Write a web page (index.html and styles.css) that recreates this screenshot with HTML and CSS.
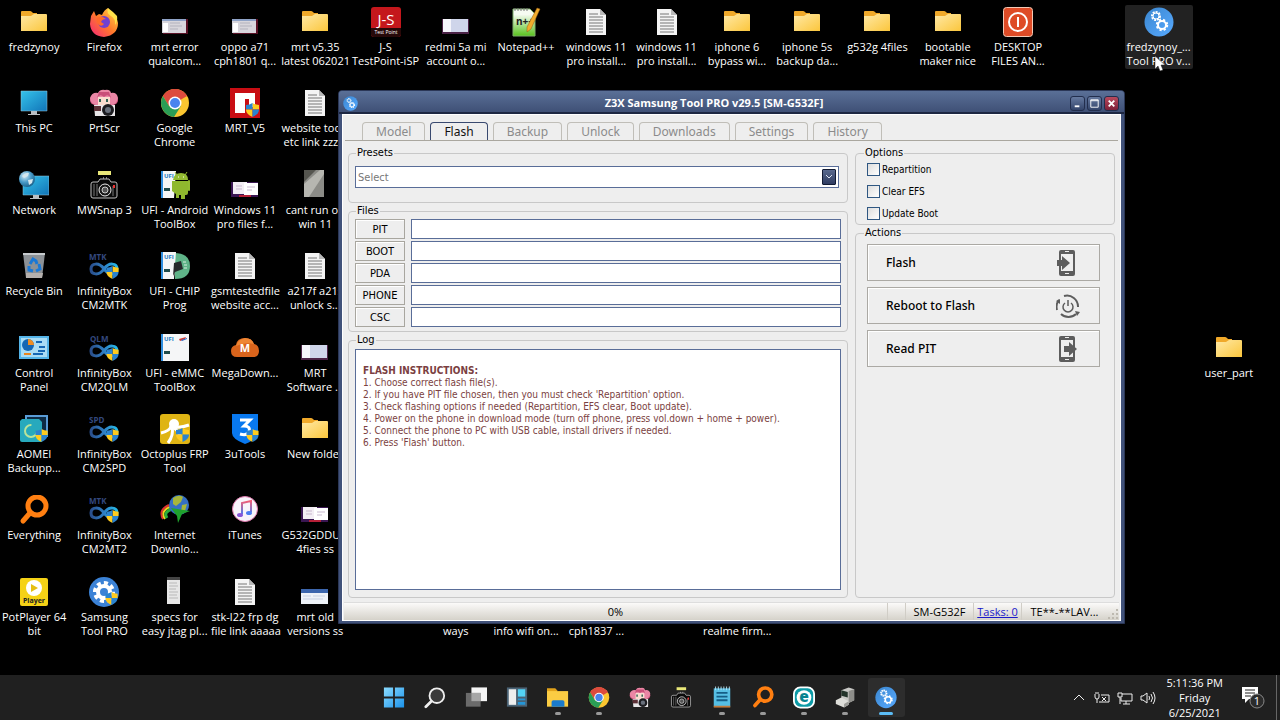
FILE: index.html
```html
<!DOCTYPE html>
<html lang="en">

<head>
  <meta charset="UTF-8">
  <meta name="viewport" content="width=device-width, initial-scale=1.0">
  <title>Z3X Samsung Tool PRO</title>
  <link rel="stylesheet" href="styles.css">
</head>

<body>

  <!-- shared icons -->
  <svg class="defs" aria-hidden="true">
    <defs>
      <linearGradient id="g-folder" x1="0" y1="0" x2="1" y2="1">
        <stop offset="0" stop-color="#ffe9a6" />
        <stop offset="1" stop-color="#fbc63c" />
      </linearGradient>
      <linearGradient id="g-screen" x1="0" y1="0" x2="1" y2="1">
        <stop offset="0" stop-color="#35c3ea" />
        <stop offset="1" stop-color="#1174b8" />
      </linearGradient>
      <linearGradient id="g-blue" x1="0" y1="0" x2="1" y2="1">
        <stop offset="0" stop-color="#3a86cf" />
        <stop offset="1" stop-color="#58aaff" />
      </linearGradient>
      <linearGradient id="g-inf" x1="0" y1="0" x2="1" y2="0">
        <stop offset="0" stop-color="#2a4f8c" />
        <stop offset="0.5" stop-color="#2f7fc4" />
        <stop offset="1" stop-color="#25b9e8" />
      </linearGradient>
      <linearGradient id="g-fox" x1="1" y1="0" x2="0" y2="1">
        <stop offset="0" stop-color="#ffe14a" />
        <stop offset="0.5" stop-color="#ff7a2a" />
        <stop offset="1" stop-color="#f4227a" />
      </linearGradient>
      <linearGradient id="g-win" x1="0" y1="0" x2="1" y2="1">
        <stop offset="0" stop-color="#8bdcff" />
        <stop offset="1" stop-color="#1b92ea" />
      </linearGradient>
      <linearGradient id="g-note" x1="0" y1="0" x2="0" y2="1">
        <stop offset="0" stop-color="#f25b74" />
        <stop offset="1" stop-color="#4a7df0" />
      </linearGradient>
      <linearGradient id="g-npp" x1="0" y1="0" x2="0" y2="1">
        <stop offset="0.2" stop-color="#f6fbf2" />
        <stop offset="1" stop-color="#58c21c" />
      </linearGradient>
      <radialGradient id="g-globe" cx="0.35" cy="0.3" r="0.8">
        <stop offset="0" stop-color="#d7ecf7" />
        <stop offset="0.5" stop-color="#4a9cc9" />
        <stop offset="1" stop-color="#14567f" />
      </radialGradient>
    </defs>

    <symbol id="folder" viewBox="0 0 30 30">
      <path d="M2 5q0-1 1-1h8q1 0 2 1l1 1h4v5H2z" fill="#f0a92a" />
      <path d="M2 9h10l3-2h12q1 0 1 1v16H2z" fill="url(#g-folder)" />
    </symbol>
    <symbol id="file" viewBox="0 0 30 30">
      <path d="M5 2h14l6 6v20H5z" fill="#f4f4f4" />
      <path d="M19 2l6 6h-6z" fill="#b9b9b9" />
      <path d="M8 7h9M8 10h14M8 13h14M8 16h14M8 19h14M8 22h14M8 25h14" stroke="#777" fill="none" />
    </symbol>
    <symbol id="shield" viewBox="0 0 14 15">
      <path d="M7 0q3 2 7 2v5H7z" fill="#ffcb1f" />
      <path d="M7 0Q4 2 0 2v5h7z" fill="#2a83cf" />
      <path d="M0 7q0 5 7 8V7z" fill="#ffcb1f" />
      <path d="M14 7q0 5-7 8V7z" fill="#2a83cf" />
    </symbol>
    <symbol id="thumb" viewBox="0 0 30 30">
      <path d="M3 12h25v15H3z" fill="#5a1226" />
      <path d="M2 12h24v14H2z" fill="#d8d6dc" />
      <path d="M2 12h24v2H2z" fill="#8fa3c7" />
      <path d="M3 16h5v9H3z" fill="#fff" />
      <path d="M10 16h10M10 19h12M10 22h8" stroke="#b2b2bd" fill="none" />
    </symbol>
    <symbol id="thumb-two" viewBox="0 0 30 30">
      <path d="M1 12h27v15H1z" fill="#3a1652" />
      <path d="M3 12h14v12H3z" fill="#f3eef4" />
      <path d="M14 13h14v12H14z" fill="#fff" />
      <path d="M6 16h6M6 19h6M17 17h8M17 20h5" stroke="#c9b9cf" fill="none" />
      <path d="M9 25h12v2H9z" fill="#b51f37" />
    </symbol>
    <symbol id="thumb-white" viewBox="0 0 30 30">
      <path d="M1 12h27v15H1z" fill="#eef2f8" />
      <path d="M1 12h27v4H1z" fill="#3c66ad" />
      <path d="M3 19h8M13 19h12M3 22h20" stroke="#c9d2e2" fill="none" />
    </symbol>
    <symbol id="thumb-mix" viewBox="0 0 30 30">
      <path d="M1 12h27v15H1z" fill="#4b2246" />
      <path d="M2 12h10v13H2z" fill="#f5f5fb" />
      <path d="M10 12h17v13H10z" fill="#cfd5ea" />
    </symbol>
    <symbol id="chrome" viewBox="0 0 30 30">
      <circle cx="15" cy="15" r="14" fill="#fbc630" />
      <path d="M15 15L2.900 8A14 14 0 0 1 27.100 8z" fill="#dd4b3e" />
      <path d="M15 8h12.100A14 14 0 0 0 2.900 8L9 18z" fill="#dd4b3e" />
      <path d="M2.900 8A14 14 0 0 0 14 29l7-11-6 3-6-3z" fill="#2a9d55" />
      <circle cx="15" cy="15" r="6.500" fill="#fff" />
      <circle cx="15" cy="15" r="5" fill="#4a84ee" />
    </symbol>
    <symbol id="girl" viewBox="0 0 30 30">
      <circle cx="6" cy="12" r="5" fill="#d85c86" />
      <circle cx="24" cy="12" r="5" fill="#d85c86" />
      <path d="M1 10q2-6 8-5 2-4 7-3 5-1 6 3 6-1 7 5-2 7-6 7H7q-5-1-6-7z" fill="#ea86a5" />
      <path d="M9 9h12v8q-6 3-12 0z" fill="#fadccf" />
      <path d="M8 10q3-5 7-1 4-4 7 1l-2-6H10z" fill="#c94e79" />
      <path d="M11 11v3M18 11v3" stroke="#326457" stroke-width="2" fill="none" />
      <path d="M5 17h21v11H6z" fill="#e8e6e8" />
      <circle cx="19" cy="22" r="6" fill="#1c1c20" />
      <circle cx="19" cy="22" r="3" fill="#69707c" />
      <path d="M5 18h7v5H5z" fill="#5c3036" />
    </symbol>
    <symbol id="camera" viewBox="0 0 30 30">
      <path d="M9 1h13v4H9z" fill="#e9e779" />
      <path d="M14 8h1M17 8h1" stroke="#fff" />
      <path d="M2 14q0-2 2-2h5l2-3h9l2 3h4q2 0 2 2v12q0 2-2 2H4q-2 0-2-2z" fill="#0a0a0a" stroke="#bdbdbd" />
      <path d="M5 14v12M8 14v12M24 16v10" stroke="#777" fill="none" />
      <path d="M25 15v3" stroke="#e33" stroke-width="2" />
      <circle cx="16" cy="20" r="6" fill="#191919" stroke="#eee" />
      <circle cx="16" cy="20" r="3" fill="#555" stroke="#ccc" />
    </symbol>
    <symbol id="glass" viewBox="0 0 30 30">
      <circle cx="18" cy="11" r="9" fill="none" stroke="#ff7f11" stroke-width="5" />
      <path d="M11 18L4 26" stroke="#ff7f11" stroke-width="5" stroke-linecap="round" />
    </symbol>
    <symbol id="infinity" viewBox="0 0 30 30">
      <path d="M15 18C10 11 2 12 2 18s8 7 13 0 13-6 13 0-8 7-13 0z" fill="none" stroke="url(#g-inf)" stroke-width="3" />
      <use href="#shield" x="17" y="15" width="13" height="13" />
    </symbol>
    <symbol id="gears" viewBox="0 0 30 30">
      <circle cx="15" cy="15" r="14.500" fill="url(#g-blue)" />
      <circle cx="12" cy="9" r="4" fill="none" stroke="#fff" stroke-width="2" stroke-dasharray="2 1" />
      <circle cx="12" cy="9" r="3" fill="none" stroke="#fff" />
      <circle cx="18" cy="18" r="5" fill="none" stroke="#fff" stroke-width="2.500" stroke-dasharray="2 2" />
      <circle cx="18" cy="18" r="4" fill="none" stroke="#fff" stroke-width="2" />
    </symbol>
    <symbol id="ufi" viewBox="0 0 30 30">
      <path d="M1 1h15l-2 27H1z" fill="#f5f6f7" />
      <path d="M1 1h2v27H1z" fill="#2f8ee0" />
      <path d="M4 18h6v3H4z" fill="#1f4b4b" />
    </symbol>
    <symbol id="phone" viewBox="0 0 24 28">
      <path fill-rule="evenodd" d="M5 1h12q2 0 2 2v22q0 2-2 2H5q-2 0-2-2V3q0-2 2-2zM5 5v17h12V5zM9 2v1h4V2zM9 24v1h4v-1z" fill="#5d5d5d" />
    </symbol>
  </svg>

  <main class="desktop">
    <ul class="row">
      <li class="item"><svg class="icon"><use href="#folder" /></svg>fredzynoy</li>
      <li class="item">
        <svg class="icon" viewBox="0 0 30 30">
          <path d="M2 9l3-5 2 5 3-2 3 1q2-5 6-7l2 5q7 3 8 10 0 12-14 14Q2 29 1 17z" fill="url(#g-fox)" />
          <circle cx="15" cy="15" r="6" fill="#7040d0" />
          <path d="M8 11q4-3 9 1-4 0-5 3l3 2q-2 3-5 1-3-3-2-7z" fill="#ff6a2c" />
          <path d="M19 1q-2 5 3 8t4 9q3-4 2-9l-4-4z" fill="#ffe14a" />
        </svg>Firefox
      </li>
      <li class="item"><svg class="icon"><use href="#thumb" /></svg>mrt error<br>qualcom...</li>
      <li class="item"><svg class="icon"><use href="#thumb" /></svg>oppo a71<br>cph1801 q...</li>
      <li class="item"><svg class="icon"><use href="#folder" /></svg>mrt v5.35<br>latest 062021</li>
      <li class="item">
        <svg class="icon" viewBox="0 0 30 30">
          <rect width="30" height="30" rx="3" fill="#c4171c" />
          <path d="M0 21h30v6q0 3-3 3H3q-3 0-3-3z" fill="#260909" />
          <text x="15" y="18" font-size="15" text-anchor="middle" fill="#fff">J-S</text>
          <text x="15" y="27" font-size="5" text-anchor="middle" fill="#fff">Test Point</text>
        </svg>J-S<br>TestPoint-iSP
      </li>
      <li class="item"><svg class="icon"><use href="#thumb-mix" /></svg>redmi 5a mi<br>account o...</li>
      <li class="item">
        <svg class="icon" viewBox="0 0 30 30">
          <path d="M2 2h17l5 5v22H2z" fill="url(#g-npp)" stroke="#7fae6a" />
          <path d="M4 1v3M7 1v3M10 1v3M13 1v3M16 1v3" stroke="#777" />
          <text x="5" y="18" font-size="10" font-weight="700" fill="#222">n++</text>
          <path d="M26 1l3 1-9 20-4 3v-5z" fill="#f1ac2d" stroke="#935c14" stroke-width="0.500" />
        </svg>Notepad++
      </li>
      <li class="item"><svg class="icon"><use href="#file" /></svg>windows 11<br>pro install...</li>
      <li class="item"><svg class="icon"><use href="#file" /></svg>windows 11<br>pro install...</li>
      <li class="item"><svg class="icon"><use href="#folder" /></svg>iphone 6<br>bypass wi...</li>
      <li class="item"><svg class="icon"><use href="#folder" /></svg>iphone 5s<br>backup da...</li>
      <li class="item"><svg class="icon"><use href="#folder" /></svg>g532g 4files</li>
      <li class="item"><svg class="icon"><use href="#folder" /></svg>bootable<br>maker nice</li>
      <li class="item">
        <svg class="icon" viewBox="0 0 30 30">
          <rect x="0.500" y="0.500" width="29" height="29" rx="3" fill="#de4b26" stroke="#f3c9b5" />
          <circle cx="15" cy="15" r="9" fill="none" stroke="#fff" stroke-width="2" />
          <path d="M15 10v10" stroke="#fff" stroke-width="2" />
        </svg>DESKTOP<br>FILES AN...
      </li>
      <li class="item col-17 hovered"><svg class="icon"><use href="#gears" /></svg>fredzynoy_...<br>Tool PRO v...</li>
    </ul>

    <ul class="row">
      <li class="item">
        <svg class="icon" viewBox="0 0 30 30">
          <path d="M2 3h26v20H2z" fill="url(#g-screen)" stroke="#9bc7d8" stroke-width="0.500" />
          <path d="M12 23h6v3h3v1H9v-1h3z" fill="#b9bec2" />
        </svg>This PC
      </li>
      <li class="item"><svg class="icon"><use href="#girl" /></svg>PrtScr</li>
      <li class="item"><svg class="icon"><use href="#chrome" /></svg>Google<br>Chrome</li>
      <li class="item">
        <svg class="icon" viewBox="0 0 30 30">
          <path d="M0 0h30v30H0z" fill="#c90d13" />
          <path d="M5 5h20v14h-6v-8h-4v14H5z" fill="#fff" />
          <use href="#shield" x="16" y="15" width="13" height="14" />
        </svg>MRT_V5
      </li>
      <li class="item"><svg class="icon"><use href="#file" /></svg>website tools<br>etc link zzz...</li>
      <li class="item col-9"><svg class="icon"><use href="#file" /></svg></li>
    </ul>

    <ul class="row">
      <li class="item">
        <svg class="icon" viewBox="0 0 30 30">
          <path d="M4 6h26v19H4z" fill="url(#g-screen)" stroke="#9bc7d8" stroke-width="0.500" />
          <path d="M14 25h6v3h3v1H11v-1h3z" fill="#b9bec2" />
          <circle cx="8" cy="9" r="8" fill="url(#g-globe)" />
          <path d="M3 6q4-4 7-3l-1 3-4 2zM9 10l5-1-1 4-3 2z" fill="#d5e7ee" />
        </svg>Network
      </li>
      <li class="item"><svg class="icon"><use href="#camera" /></svg>MWSnap 3</li>
      <li class="item">
        <svg class="icon" viewBox="0 0 30 30">
          <use href="#ufi" width="30" height="30" />
          <text x="4" y="8" font-size="6" font-weight="700" fill="#1479c4">UFI</text>
          <path d="M13 10q1-7 8-7t7 7z" fill="#93bb32" />
          <path d="M15 2l2 3M27 2l-2 3" stroke="#93bb32" />
          <path d="M12 11h16v12q0 2-2 2h-1v4h-4v-4h-2v3h-3v-4l-4-3z" fill="#8fb82e" />
          <path d="M29 11v9" stroke="#93bb32" stroke-width="2" stroke-linecap="round" />
          <path d="M18 7h1M23 7h1" stroke="#fff" />
        </svg>UFI - Android<br>ToolBox
      </li>
      <li class="item"><svg class="icon"><use href="#thumb-two" /></svg>Windows 11<br>pro files f...</li>
      <li class="item">
        <svg class="icon" viewBox="0 0 30 30">
          <path d="M4 0h20v27H4z" fill="#8b8b86" />
          <path d="M4 14L20 0h4v4L9 27H4z" fill="#b6b6b0" />
          <path d="M4 0h12L4 12z" fill="#55554f" />
        </svg>cant run on<br>win 11
      </li>
    </ul>

    <ul class="row">
      <li class="item">
        <svg class="icon" viewBox="0 0 30 30">
          <path d="M4 2h22l-3 25H7z" fill="#8c9196" />
          <path d="M4 2h22v2H4z" fill="#c6cacd" />
          <path d="M7 22h17l-1 5H7z" fill="#b5b0ad" />
          <path d="M11 13l3-5 3 2 1 3M20 13l1 5-4 2M14 20l-4-1v-4" stroke="#1a78d6" stroke-width="3" fill="none" />
        </svg>Recycle Bin
      </li>
      <li class="item">
        <svg class="icon" viewBox="0 0 30 30">
          <text x="0" y="9" font-size="8" font-weight="700" fill="#34497f">MTK</text>
          <use href="#infinity" width="30" height="30" />
        </svg>InfinityBox<br>CM2MTK
      </li>
      <li class="item">
        <svg class="icon" viewBox="0 0 30 30">
          <path d="M14 2q16 0 16 13T15 28z" fill="#5fb388" />
          <use href="#ufi" width="30" height="30" />
          <text x="4" y="8" font-size="6" font-weight="700" fill="#1479c4">UFI</text>
          <path d="M14 12l7-2 2 8-8 3-2 4z" fill="#26292b" />
          <path d="M23 11h3M24 14h3M24 17h3" stroke="#d7eee0" />
        </svg>UFI - CHIP<br>Prog
      </li>
      <li class="item"><svg class="icon"><use href="#file" /></svg>gsmtestedfile<br>website acc...</li>
      <li class="item"><svg class="icon"><use href="#file" /></svg>a217f a21s<br>unlock s...</li>
    </ul>

    <ul class="row">
      <li class="item">
        <svg class="icon" viewBox="0 0 30 30">
          <path d="M0 3h30v23H0z" fill="#54b4e8" />
          <path d="M2 5h26v19H2z" fill="#a9dcf5" />
          <circle cx="9" cy="12" r="6" fill="#1567b4" />
          <path d="M9 12V6a6 6 0 0 1 6 6z" fill="#ef8d22" />
          <path d="M17 9h6M20 14h6M19 18h7" stroke="#1567b4" stroke-width="2" />
          <path d="M5 21h7" stroke="#e8861e" stroke-width="2" />
          <path d="M14 21h10" stroke="#1567b4" stroke-width="2" />
        </svg>Control<br>Panel
      </li>
      <li class="item">
        <svg class="icon" viewBox="0 0 30 30">
          <text x="1" y="9" font-size="8" font-weight="700" fill="#34497f">QLM</text>
          <use href="#infinity" width="30" height="30" />
        </svg>InfinityBox<br>CM2QLM
      </li>
      <li class="item">
        <svg class="icon" viewBox="0 0 30 30">
          <path d="M10 1h19v27H10z" fill="#f5f6f7" />
          <use href="#ufi" width="30" height="30" />
          <text x="4" y="8" font-size="6" font-weight="700" fill="#1479c4">UFI</text>
          <path d="M19 6l7-2-1 2-5 2z" fill="#d4392f" />
          <path d="M21 7l6-2v1l-5 2z" fill="#2c66c4" />
        </svg>UFI - eMMC<br>ToolBox
      </li>
      <li class="item">
        <svg class="icon" viewBox="0 0 30 30">
          <path d="M7 24q-6 0-6-6 0-5 5-6 1-7 9-7 7 0 9 6 5 1 5 7 0 6-6 6z" fill="#d9641c" />
          <path d="M6 13q2-7 9-8 7 0 9 6-9-2-18 2z" fill="#ee8634" />
          <text x="15" y="19" font-size="11" font-weight="700" text-anchor="middle" fill="#fff">M</text>
        </svg>MegaDown...
      </li>
      <li class="item"><svg class="icon"><use href="#thumb-mix" /></svg>MRT<br>Software ...</li>
      <li class="item col-18"><svg class="icon"><use href="#folder" /></svg>user_part</li>
    </ul>

    <ul class="row">
      <li class="item">
        <svg class="icon" viewBox="0 0 30 30">
          <path d="M7 2h21v20H7z" fill="#0d2b45" stroke="#5a9bd6" stroke-width="2" />
          <path d="M1 7l2-2h17l3 3v20H3q-2 0-2-2z" fill="#27a9bd" />
          <circle cx="12" cy="17" r="6" fill="none" stroke="#b9e39a" stroke-width="2" stroke-dasharray="28 9" />
          <use href="#shield" x="16" y="15" width="13" height="13" />
        </svg>AOMEI<br>Backupp...
      </li>
      <li class="item">
        <svg class="icon" viewBox="0 0 30 30">
          <text x="0" y="9" font-size="8" font-weight="700" fill="#34497f">SPD</text>
          <use href="#infinity" width="30" height="30" />
        </svg>InfinityBox<br>CM2SPD
      </li>
      <li class="item">
        <svg class="icon" viewBox="0 0 30 30">
          <rect width="30" height="30" rx="3" fill="#dfb414" />
          <ellipse cx="14" cy="10" rx="5" ry="5" fill="#fff" />
          <path d="M11 12q-1 5-10 7M12 13q2 8-4 16M15 13q6 1 14-2M14 14q5 3 6 9" stroke="#fff" stroke-width="3" fill="none" />
          <use href="#shield" x="16" y="14" width="13" height="14" />
        </svg>Octoplus FRP<br>Tool
      </li>
      <li class="item">
        <svg class="icon" viewBox="0 0 30 30">
          <path d="M2 0h26v19q0 6-13 11Q2 25 2 19z" fill="#0878ef" />
          <path d="M10 6h10l-6 6q7 0 5 6-2 4-9 2" stroke="#fff" stroke-width="3" fill="none" />
          <use href="#shield" x="16" y="15" width="13" height="13" />
        </svg>3uTools
      </li>
      <li class="item"><svg class="icon"><use href="#folder" /></svg>New folder</li>
    </ul>

    <ul class="row">
      <li class="item"><svg class="icon"><use href="#glass" /></svg>Everything</li>
      <li class="item">
        <svg class="icon" viewBox="0 0 30 30">
          <text x="0" y="9" font-size="8" font-weight="700" fill="#34497f">MTK</text>
          <use href="#infinity" width="30" height="30" />
        </svg>InfinityBox<br>CM2MT2
      </li>
      <li class="item">
        <svg class="icon" viewBox="0 0 30 30">
          <path d="M3 24Q-2 15 9 10" stroke="#d33" stroke-width="2" fill="none" />
          <path d="M5 24Q0 16 10 12" stroke="#f3d51f" stroke-width="2" fill="none" />
          <path d="M7 23Q3 17 12 14" stroke="#2cae3a" stroke-width="3" fill="none" />
          <circle cx="19" cy="10" r="10" fill="#356fc4" />
          <path d="M13 3q6-4 10-1l-2 5-5 4-3-2zM22 10l5-1-2 7-4 1z" fill="#a7b63a" />
          <path d="M11 13l19 3-8 3-4 9-1-7z" fill="#1fa32d" />
        </svg>Internet<br>Downlo...
      </li>
      <li class="item">
        <svg class="icon" viewBox="0 0 30 30">
          <circle cx="15" cy="14" r="12.500" fill="#f7f3fa" stroke="#e27bb0" />
          <path d="M12 19V8l9-2v11" stroke="url(#g-note)" stroke-width="2" fill="none" />
          <ellipse cx="10" cy="20" rx="3" ry="2" fill="#8756d8" />
          <ellipse cx="19" cy="18" rx="3" ry="2" fill="#4a7df0" />
        </svg>iTunes
      </li>
      <li class="item"><svg class="icon"><use href="#thumb-two" /></svg>G532GDDU...<br>4fies ss</li>
    </ul>

    <ul class="row">
      <li class="item">
        <svg class="icon" viewBox="0 0 30 30">
          <rect x="1" y="1" width="28" height="28" rx="2" fill="#f5d216" />
          <circle cx="15" cy="11" r="8" fill="#fff" />
          <path d="M12 7l7 4-7 4z" fill="#e5bf12" />
          <text x="15" y="26" font-size="7" font-weight="700" text-anchor="middle" fill="#222">Player</text>
        </svg>PotPlayer 64<br>bit
      </li>
      <li class="item">
        <svg class="icon" viewBox="0 0 30 30">
          <circle cx="15" cy="15" r="15" fill="#3b82d6" />
          <circle cx="15" cy="15" r="9" fill="none" stroke="#fff" stroke-width="4" stroke-dasharray="4 3" />
          <circle cx="15" cy="15" r="6" fill="none" stroke="#fff" stroke-width="4" />
          <use href="#shield" x="16" y="15" width="13" height="13" />
        </svg>Samsung<br>Tool PRO
      </li>
      <li class="item">
        <svg class="icon" viewBox="0 0 30 30">
          <path d="M7 0h13v27H7z" fill="#e6e6e6" />
          <path d="M7 0h13v3H7z" fill="#444" />
          <path d="M9 6h8M9 9h9M9 12h7M9 15h9M9 18h8M9 21h9" stroke="#b8b8b8" />
        </svg>specs for<br>easy jtag pl...
      </li>
      <li class="item"><svg class="icon"><use href="#file" /></svg>stk-l22 frp dg<br>file link aaaaa</li>
      <li class="item"><svg class="icon"><use href="#thumb-white" /></svg>mrt old<br>versions ss</li>
      <li class="item col-7"><span class="icon"></span><br>ways</li>
      <li class="item"><span class="icon"></span><br>info wifi on...</li>
      <li class="item"><span class="icon"></span><br>cph1837 ...</li>
      <li class="item col-11"><span class="icon"></span><br>realme firm...</li>
    </ul>

    <!-- application window -->
    <section class="window">
      <header class="titlebar">
        <svg class="title-icon"><use href="#gears" /></svg>
        <h1 class="title">Z3X Samsung Tool PRO v29.5 [SM-G532F]</h1>
        <div class="window-buttons">
          <button class="win-btn" aria-label="Minimize"><svg viewBox="0 0 14 14"><path d="M4 10h5" stroke="#fff" stroke-width="2" /></svg></button>
          <button class="win-btn" aria-label="Maximize"><svg viewBox="0 0 14 14"><path d="M3 4h8M3 3h8v8H3z" stroke="#fff" fill="none" /></svg></button>
          <button class="win-btn close" aria-label="Close"><svg viewBox="0 0 14 14"><path d="M4 4l6 6M10 4l-6 6" stroke="#fff" stroke-width="2" /></svg></button>
        </div>
      </header>

      <div class="window-body">
        <nav class="tabs">
          <button class="tab">Model</button>
          <button class="tab active">Flash</button>
          <button class="tab">Backup</button>
          <button class="tab">Unlock</button>
          <button class="tab">Downloads</button>
          <button class="tab">Settings</button>
          <button class="tab">History</button>
        </nav>

        <div class="page">
          <div class="left">
            <fieldset class="group presets">
              <legend>Presets</legend>
              <div class="select-box">
                <select class="preset-select" aria-label="Presets">
                  <option>Select</option>
                </select>
                <span class="select-arrow"><svg viewBox="0 0 12 14"><path d="M3 5l3 3 3-3" stroke="#dfe5f2" fill="none" /></svg></span>
              </div>
            </fieldset>

            <fieldset class="group files">
              <legend>Files</legend>
              <div class="file-grid">
                <button class="file-btn" id="pit">PIT</button>
                <input type="text" class="file-input" aria-labelledby="pit">
                <button class="file-btn" id="boot">BOOT</button>
                <input type="text" class="file-input" aria-labelledby="boot">
                <button class="file-btn" id="pda">PDA</button>
                <input type="text" class="file-input" aria-labelledby="pda">
                <button class="file-btn" id="phone-file">PHONE</button>
                <input type="text" class="file-input" aria-labelledby="phone-file">
                <button class="file-btn" id="csc">CSC</button>
                <input type="text" class="file-input" aria-labelledby="csc">
              </div>
            </fieldset>

            <fieldset class="group log">
              <legend>Log</legend>
              <div class="log-text">
                <strong>FLASH INSTRUCTIONS:</strong><br>
                1. Choose correct flash file(s).<br>
                2. If you have PIT file chosen, then you must check 'Repartition' option.<br>
                3. Check flashing options if needed (Repartition, EFS clear, Boot update).<br>
                4. Power on the phone in download mode (turn off phone, press vol.down + home + power).<br>
                5. Connect the phone to PC with USB cable, install drivers if needed.<br>
                6. Press 'Flash' button.
              </div>
            </fieldset>
          </div>

          <div class="right">
            <fieldset class="group options">
              <legend>Options</legend>
              <label class="check"><input type="checkbox">Repartition</label>
              <label class="check"><input type="checkbox">Clear EFS</label>
              <label class="check"><input type="checkbox">Update Boot</label>
            </fieldset>

            <fieldset class="group actions">
              <legend>Actions</legend>
              <button class="action">Flash
                <svg viewBox="0 0 24 28"><use href="#phone" width="24" height="28" /><path d="M1 11h5V7l8 7-8 7v-4H1z" fill="#5d5d5d" /></svg>
              </button>
              <button class="action">Reboot to Flash
                <svg viewBox="0 0 24 28">
                  <path d="M1 18A11 11 0 0 1 3 8M8 4A11 11 0 0 1 22 15M20 22A11 11 0 0 1 5 22" fill="none" stroke="#5d5d5d" stroke-width="2" />
                  <path d="M0 9l4-2v5zM19 19l5 1-3 4z" fill="#5d5d5d" />
                  <path d="M9 11a5 5 0 1 0 6 0M12 8v6" fill="none" stroke="#5d5d5d" stroke-width="1.500" />
                </svg>
              </button>
              <button class="action">Read PIT
                <svg viewBox="0 0 24 28"><use href="#phone" width="24" height="28" /><path d="M8 11h5V7l8 7-8 7v-4H8z" fill="#5d5d5d" /></svg>
              </button>
            </fieldset>
          </div>
        </div>

        <footer class="statusbar">
          <span class="progress">0%</span>
          <span class="gap"></span>
          <span class="model">SM-G532F</span>
          <span class="tasks"><a href="#">Tasks: 0</a></span>
          <span class="user">TE**-**LAV...</span>
          <svg class="grip" viewBox="0 0 12 12"><path d="M9 1h2v2H9zM5 5h2v2H5zM9 5h2v2H9zM1 9h2v2H1zM5 9h2v2H5zM9 9h2v2H9z" fill="#bdb9b0" /></svg>
        </footer>
      </div>
    </section>

    <svg class="cursor" viewBox="0 0 12 17"><path d="M1 1v13l3-3 2 5 3-1-2-5h4z" fill="#fff" stroke="#222" stroke-width="0.500" /></svg>
  </main>

  <footer class="taskbar">
    <div class="apps">
      <button class="app" aria-label="Start">
        <svg viewBox="0 0 24 24"><path d="M1 1h10v10H1zM13 1h10v10H13zM1 13h10v10H1zM13 13h10v10H13z" fill="url(#g-win)" /></svg>
      </button>
      <button class="app" aria-label="Search">
        <svg viewBox="0 0 24 24"><circle cx="14" cy="10" r="8" fill="#3b3b3b" stroke="#eee" stroke-width="2" /><path d="M8 16l-6 6" stroke="#eee" stroke-width="3" stroke-linecap="round" /></svg>
      </button>
      <button class="app" aria-label="Task view">
        <svg viewBox="0 0 24 24"><path d="M7 1h17v15H7z" fill="#f5f5f5" /><path d="M1 7h16v15H1z" fill="#6b6b6b" /><path d="M7 7h10v9H7z" fill="#a6a6a6" /></svg>
      </button>
      <button class="app" aria-label="Widgets">
        <svg viewBox="0 0 24 24"><path d="M1 1h22v21H1z" fill="#4b6375" /><path d="M3 3h8v17H3z" fill="#eee" /><path d="M13 3h8v8h-8z" fill="#53d3f6" /><path d="M13 13h8v2h-8zM13 17h8v3h-8z" fill="#2596d6" /></svg>
      </button>
      <button class="app open" aria-label="File Explorer">
        <svg viewBox="0 0 24 24"><path d="M0 2h9l2 2v5H0z" fill="#e2a31b" /><path d="M0 5h23v17H0z" fill="#fbcc43" /><path d="M5 22v-5q0-2 2-2h10q2 0 2 2v5z" fill="#1b7bcb" /></svg>
      </button>
      <button class="app open" aria-label="Chrome"><svg><use href="#chrome" /></svg></button>
      <button class="app" aria-label="PrtScr"><svg><use href="#girl" /></svg></button>
      <button class="app" aria-label="MWSnap"><svg><use href="#camera" /></svg></button>
      <button class="app open" aria-label="Notepad">
        <svg viewBox="0 0 24 24"><path d="M3 2h18v20H3z" fill="#56bfe4" /><path d="M3 21h18v2H3z" fill="#c27a3c" /><path d="M6 7h12M6 11h12M6 15h12" stroke="#155e86" stroke-width="2" /><path d="M5 0v4M8 0v4M11 0v4M14 0v4M17 0v4M20 0v4" stroke="#b7e4f3" /></svg>
      </button>
      <button class="app open" aria-label="Everything"><svg><use href="#glass" /></svg></button>
      <button class="app open" aria-label="Browser">
        <svg viewBox="0 0 24 24"><rect x="1" y="1" width="22" height="22" rx="7" fill="#0c9aa6" stroke="#fff" stroke-width="2" /><circle cx="12" cy="12" r="8" fill="#fff" /><text x="12" y="17" font-size="17" font-weight="800" text-anchor="middle" fill="#078491">e</text></svg>
      </button>
      <button class="app open" aria-label="Device tool">
        <svg viewBox="0 0 24 24"><path d="M8 4l8-3 6 2v12l-6 3-8-4z" fill="#c9c9c6" /><path d="M16 5l6-2v12l-6 3z" fill="#8e8e8a" /><path d="M8 4l7 2v6l-7-2z" fill="#23342a" /><path d="M2 15l6-3 8 4v4l-5 3-9-4z" fill="#deded9" /><path d="M11 19l5-3v4l-5 3z" fill="#9a9a96" /></svg>
      </button>
      <button class="app current" aria-label="Samsung Tool PRO"><svg><use href="#gears" /></svg></button>
    </div>

    <div class="tray">
      <svg class="tray-icon" viewBox="0 0 16 16"><path d="M3 10l5-5 5 5" /></svg>
      <svg class="tray-icon" viewBox="0 0 16 16"><path d="M1 4v3q0 2 2 2t2-2V4M3 9v4M2 2v2M4 2v2M7 5h8v7H5M8 7l4 4M12 7l-4 4" /></svg>
      <svg class="tray-icon" viewBox="0 0 16 16"><path d="M5 4h10v7H4V8M9 11v3M6 14h7M1 3h4v4H1zM3 7v7" /></svg>
      <svg class="tray-icon" viewBox="0 0 16 16"><path d="M1 6h2l4-3v10l-4-3H1zM9 6q1 2 0 4M11 4q3 4 0 8M13 2q4 6 0 12" /></svg>
      <div class="clock">5:11:36 PM<br>Friday<br>6/25/2021</div>
      <svg class="notice" viewBox="0 0 24 24">
        <path d="M1 1h16v12H8l-4 4v-4H1z" fill="#fff" />
        <path d="M4 4h10M4 7h10M4 10h6" stroke="#222" />
        <circle cx="16" cy="15" r="7" fill="#2b2b2b" stroke="#888" />
        <text x="16" y="19" font-size="11" text-anchor="middle" fill="#fff">1</text>
      </svg>
    </div>
  </footer>

</body>

</html>
```

FILE: styles.css
```css
* {
  box-sizing: border-box;
}

body {
  margin: 0;
  min-height: 100vh;
  display: flex;
  flex-direction: column;
  background: #000;
  color: #fff;
  font-family: "Open Sans", "Noto Sans", sans-serif;
  font-size: 11px;
  overflow: hidden;
}

button,
input,
select {
  font: inherit;
  color: inherit;
  margin: 0;
  padding: 0;
  border-radius: 0;
}

.defs {
  position: absolute;
  width: 0;
  height: 0;
}

/* desktop */
.desktop {
  position: relative;
  flex: 1;
  display: flex;
  flex-direction: column;
  padding: 0 16px 24px 0;
}

.row {
  flex: 1;
  display: grid;
  grid-template-columns: repeat(18, minmax(0, 1fr));
  margin: 0 0 0 -1px;
  padding: 5px 0 0;
  list-style: none;
}

.item {
  justify-self: center;
  align-self: start;
  width: 68px;
  height: 64px;
  padding-top: 2px;
  line-height: 14px;
  text-align: center;
  white-space: nowrap;
}

.icon {
  display: block;
  width: 30px;
  height: 30px;
  margin: 0 auto 3px;
}

.hovered {
  background: #222;
  border-radius: 2px;
}

.col-7 {
  grid-column: 7;
}

.col-9 {
  grid-column: 9;
}

.col-11 {
  grid-column: 11;
}

.col-17 {
  grid-column: 17;
}

.col-18 {
  grid-column: 18;
}

.cursor {
  position: absolute;
  left: 1154px;
  top: 55px;
  width: 12px;
  height: 17px;
}

/* window */
.window {
  position: absolute;
  inset: 90px 155px 51px 338px;
  display: flex;
  flex-direction: column;
  padding: 0 3px 2px;
  background: #41527a;
  border: 1px solid #2b3757;
  border-radius: 4px 4px 0 0;
  color: #000;
  font-family: "DejaVu Sans Condensed", "DejaVu Sans", sans-serif;
}

.titlebar {
  display: flex;
  align-items: center;
  height: 23px;
  margin: 0 -3px;
  padding: 3px 5px 0 4px;
  border-bottom: 2px solid #1d2742;
  border-radius: 3px 3px 0 0;
  background: linear-gradient(#5a7097, #3f5076);
}

.title-icon {
  width: 15px;
  height: 15px;
}

.title {
  flex: 1;
  margin: 0;
  color: #fff;
  font-family: "Open Sans", "Noto Sans", sans-serif;
  font-size: 11px;
  line-height: 18px;
  text-align: center;
}

.window-buttons {
  display: flex;
  gap: 2px;
}

.win-btn {
  width: 15px;
  height: 15px;
  border: 1px solid #222e4d;
  border-radius: 3px;
  background: linear-gradient(#667aa0, #33446a);
}

.win-btn svg {
  display: block;
  width: 13px;
  height: 13px;
}

.close {
  background: linear-gradient(#b94a5e, #7d1f38);
}

.window-body {
  flex: 1;
  display: flex;
  flex-direction: column;
  background: #eee;
  border: 1px solid #fff;
}

.tabs {
  display: flex;
  gap: 5px;
  padding: 7px 17px 0;
  margin: 0 2px;
  border-bottom: 1px solid #aaa79f;
}

.tab {
  height: 18px;
  padding: 0 13px;
  border: 1px solid #c0beb8;
  border-bottom: 0;
  border-radius: 4px 4px 0 0;
  background: #eee;
  color: #8b8b8b;
  font-family: "Noto Sans", "Open Sans", sans-serif;
  font-size: 12px;
  line-height: 16px;
}

.tab.active {
  border-color: #39496f;
  color: #111;
}

.page {
  flex: 1;
  display: grid;
  grid-template-columns: minmax(0, 500fr) minmax(0, 260fr);
  gap: 7px;
  padding: 6px 5px 4px;
}

.left,
.right {
  display: flex;
  flex-direction: column;
  gap: 2px;
}

.group {
  min-width: 0;
  margin: 0;
  padding: 6px;
  border: 1px solid #c8c8c8;
  border-radius: 4px;
}

.group legend {
  margin-left: 1px;
  padding: 0 1px;
  line-height: 12px;
}

.right .group legend {
  margin-left: -3px;
}

.presets {
  padding: 7px 8px 14px 6px;
}

.select-box {
  display: flex;
  height: 22px;
  padding: 2px;
  border: 1px solid #596d98;
  background: #fff;
}

.preset-select {
  flex: 1;
  border: 0;
  background: #fff;
  color: #777;
  appearance: none;
}

.select-arrow {
  width: 14px;
  border: 1px solid #111a33;
  border-radius: 1px;
  background: linear-gradient(#59698e, #2f3c61);
}

.select-arrow svg {
  display: block;
  width: 12px;
  height: 14px;
}

.files {
  padding: 2px 6px 4px;
}

.file-grid {
  display: grid;
  grid-template-columns: 50px 1fr;
  grid-auto-rows: 20px;
  gap: 2px 6px;
}

.file-btn {
  border: 1px solid #a8a69f;
  background: #eee;
  box-shadow: inset 1px 1px #fff;
}

.file-input {
  min-width: 0;
  border: 1px solid #596d98;
  background: #fff;
}

.log {
  flex: 1;
  display: flex;
  padding: 3px 6px 7px;
}

.log-text {
  flex: 1;
  padding: 15px 7px;
  border: 1px solid #596d98;
  background: #fff;
  color: #7b3f42;
  font-size: 10px;
  line-height: 12px;
}

.options {
  display: flex;
  flex-direction: column;
  gap: 9px;
  padding: 4px 11px;
}

.check {
  display: flex;
  align-items: center;
  gap: 2px;
  height: 13px;
  font-size: 10px;
}

.check input {
  width: 13px;
  height: 13px;
  appearance: none;
  border: 1px solid #2f5782;
  background: linear-gradient(135deg, #ddd, #fff);
}

.actions {
  flex: 1;
  padding: 5px 14px 5px 11px;
}

.action {
  display: flex;
  justify-content: space-between;
  align-items: center;
  width: 100%;
  height: 37px;
  margin-bottom: 6px;
  padding: 0 19px 0 18px;
  border: 1px solid #aba9a4;
  background: #eee;
  box-shadow: inset 1px 1px #fff;
  font-family: "Noto Sans", "Open Sans", sans-serif;
  font-size: 12px;
  font-weight: 500;
}

.action svg {
  width: 24px;
  height: 28px;
}

.statusbar {
  display: flex;
  height: 18px;
  margin: 0 1px;
  border-top: 1px solid #ddd;
  background: linear-gradient(#fbfaf9, #d5d2ca);
  font-family: "Open Sans", "Noto Sans", sans-serif;
  line-height: 17px;
  text-align: center;
}

.statusbar span {
  border-right: 1px solid #d0cdc6;
}

.progress {
  flex: 1;
}

.gap {
  width: 18px;
}

.model {
  width: 68px;
}

.tasks {
  width: 48px;
}

.tasks a {
  color: #1a1acb;
}

.statusbar .user {
  width: 85px;
  border: 0;
}

.grip {
  width: 12px;
  height: 12px;
  align-self: end;
}

/* taskbar */
.taskbar {
  display: grid;
  grid-template-columns: 1fr auto 1fr;
  height: 45px;
  background: #202020;
}

.apps {
  display: flex;
  gap: 4px;
  grid-column: 2;
  padding: 3px 0;
}

.app {
  display: flex;
  flex-direction: column;
  align-items: center;
  width: 37px;
  padding-top: 8px;
  border: 0;
  border-radius: 3px;
  background: none;
}

.app svg {
  width: 22px;
  height: 23px;
}

.app.open::after,
.app.current::after {
  content: "";
  width: 6px;
  height: 3px;
  margin-top: 3px;
  border-radius: 2px;
  background: #999;
}

.app.current {
  background: #2d2d2d;
}

.app.current::after {
  width: 14px;
  background: #5bbcf5;
}

.tray {
  display: flex;
  justify-content: flex-end;
  align-items: center;
  gap: 7px;
  margin-right: 3px;
  padding-right: 11px;
  border-right: 1px solid #666;
}

.tray-icon {
  width: 16px;
  height: 16px;
  fill: none;
  stroke: #eee;
}

.clock {
  padding: 0 11px 0 3px;
  line-height: 15px;
  text-align: center;
}

.notice {
  width: 24px;
  height: 24px;
}
```
